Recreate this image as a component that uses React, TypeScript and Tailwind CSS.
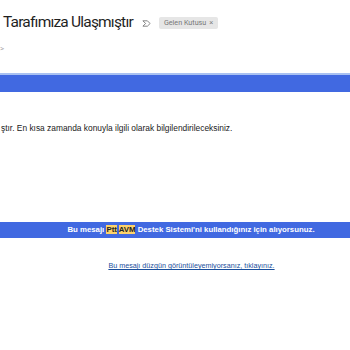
export default function App() {
  return (
    <div className="relative h-[350px] w-[350px] overflow-hidden bg-white">
      <div className="flex items-center pl-[3px] pt-[12px]">
        <h1 className="text-[15.5px] leading-[20px] tracking-[-0.8px] text-[#1f1f1f] [font-family:Roboto,'Open_Sans',sans-serif]">
          Tarafımıza Ulaşmıştır
        </h1>
        <svg width="9" height="9" viewBox="0 0 10 10" className="ml-[9px] mt-[2px]">
          <path d="M1 2h5l3 3-3 3H1l3-3z" fill="none" stroke="#6b6b6b" strokeWidth="0.9" strokeLinejoin="round" />
        </svg>
        <span className="ml-[8px] mt-[2px] flex h-[12px] items-center gap-[3px] rounded-[2px] bg-[#e6e6e6] px-[5px] text-[7.2px] text-[#777] [font-family:Roboto,sans-serif]">
          Gelen Kutusu
          <span className="text-[7.5px] text-[#777]">×</span>
        </span>
      </div>
      <div className="mt-[12px] pl-0 text-[8px] leading-[10px] text-[#aaa] [font-family:Roboto,sans-serif]">&gt;</div>

      <div className="mt-[19px] h-[19px] border-t-2 border-[#a9c1f2] bg-[#4169e1]" />

      <p className="mt-[30px] pl-[1px] text-[8.4px] leading-[12px] text-[#222] [font-family:'Liberation_Sans',Arial,sans-serif]">
        ştır. En kısa zamanda konuyla ilgili olarak bilgilendirileceksiniz.
      </p>

      <div className="mt-[88px] flex h-[16px] items-center justify-center bg-[#4169e1] pl-[32px]">
        <span className="text-[7.8px] font-bold text-white [font-family:'Liberation_Sans',Arial,sans-serif]">
          Bu mesajı <mark className="bg-[#fcd26b] text-[#222]">Ptt</mark>{' '}
          <mark className="bg-[#fcd26b] text-[#222]">AVM</mark> Destek Sistemi'ni kullandığınız için alıyorsunuz.
        </span>
      </div>

      <div className="mt-[23px] flex justify-center pl-[33px]">
        <a href="#" className="text-[7.2px] leading-[9px] text-[#1a4f9c] underline [font-family:'Liberation_Sans',Arial,sans-serif]">
          Bu mesajı düzgün görüntüleyemiyorsanız, tıklayınız.
        </a>
      </div>
    </div>
  )
}
